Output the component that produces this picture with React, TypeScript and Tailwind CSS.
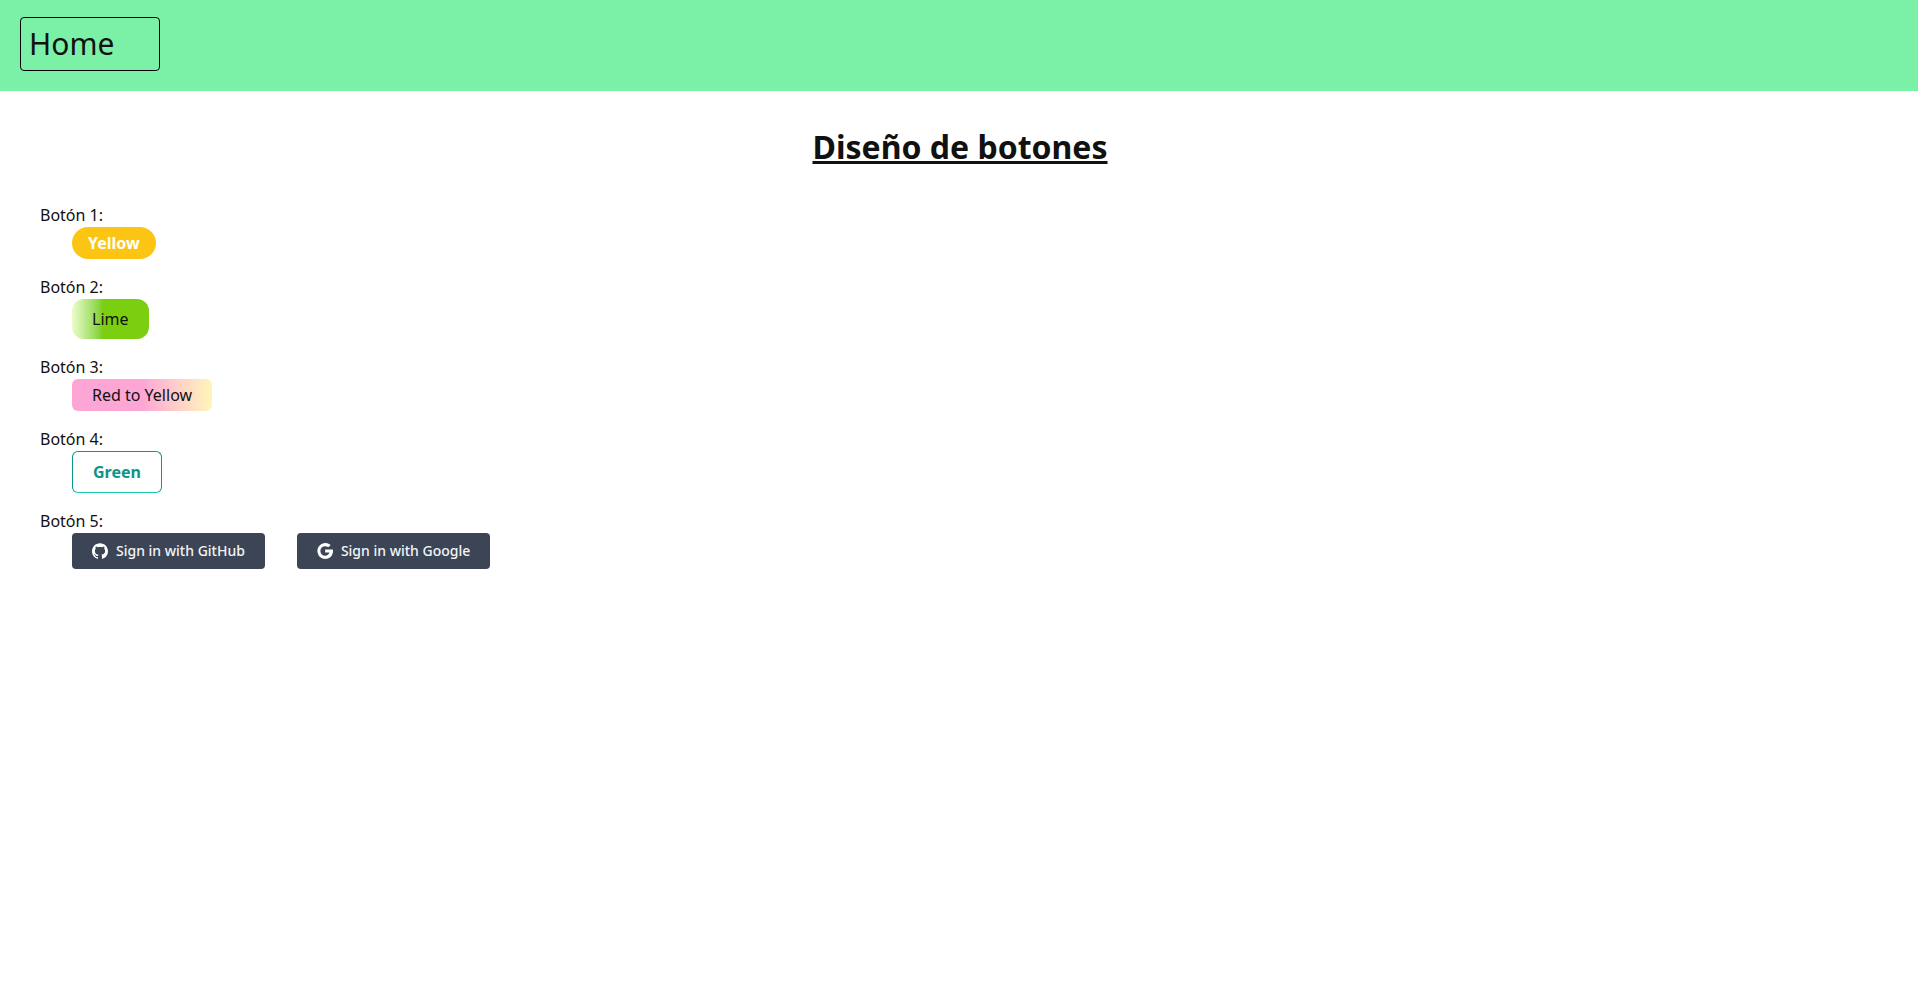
import type { ReactNode } from "react";
import { SiGithub } from "react-icons/si";

function Row({ label, children }: { label: string; children: ReactNode }) {
  return (
    <div className="mb-4">
      <p>{label}</p>
      <div className="ml-8 flex gap-8">{children}</div>
    </div>
  );
}

function GoogleIcon() {
  return (
    <svg className="mr-2 h-4 w-4 text-white" viewBox="0 0 24 24" fill="currentColor" aria-hidden="true">
      <path
        d="M12.24 9.6v4.8h6.4c-.65 2.85-3.1 4.8-6.4 4.8a7.2 7.2 0 1 1 0-14.4c1.8 0 3.45.65 4.7 1.75L20.5 3A12 12 0 1 0 12.24 24C18.5 24 24 19.5 24 12c0-.78-.12-1.62-.3-2.4Z"
      />
    </svg>
  );
}

export default function App() {
  return (
    <div className="min-h-screen bg-white font-['Noto_Sans',sans-serif] text-[#111111]">
      <header className="flex h-[91px] bg-green-300 px-5 pt-[17px]">
        <a className="h-[54px] w-[140px] rounded border border-black px-2 pt-2 text-3xl">Home</a>
      </header>
      <main className="px-10 pt-9">
        <h1 className="mb-9 pl-0.5 text-center text-[32px] leading-10 font-bold underline">Diseño de botones</h1>
        <Row label="Botón 1:">
          <button className="h-8 rounded-full bg-[#fdc513] px-4 font-bold text-white">Yellow</button>
        </Row>
        <Row label="Botón 2:">
          <button className="h-10 rounded-xl bg-linear-to-r from-lime-100 from-0% to-[#7ccf10] to-40% px-5">Lime</button>
        </Row>
        <Row label="Botón 3:">
          <button className="h-8 rounded-md bg-linear-to-r from-[#fda5d5] from-50% to-[#fff6b8] px-5">Red to Yellow</button>
        </Row>
        <Row label="Botón 4:">
          <button className="h-[42px] rounded-md border border-x-[#0d9488] border-t-[#0d9488] border-b-[#14c8b4] px-5 font-bold text-[#0d9488]">
            Green
          </button>
        </Row>
        <Row label="Botón 5:">
          <button className="flex h-9 items-center rounded bg-[#3c4556] px-5 text-sm font-medium text-gray-100">
            <SiGithub className="mr-2 h-4 w-4 text-white" />
            Sign in with GitHub
          </button>
          <button className="flex h-9 items-center rounded bg-[#3c4556] px-5 text-sm font-medium text-gray-100">
            <GoogleIcon />
            Sign in with Google
          </button>
        </Row>
      </main>
    </div>
  );
}
